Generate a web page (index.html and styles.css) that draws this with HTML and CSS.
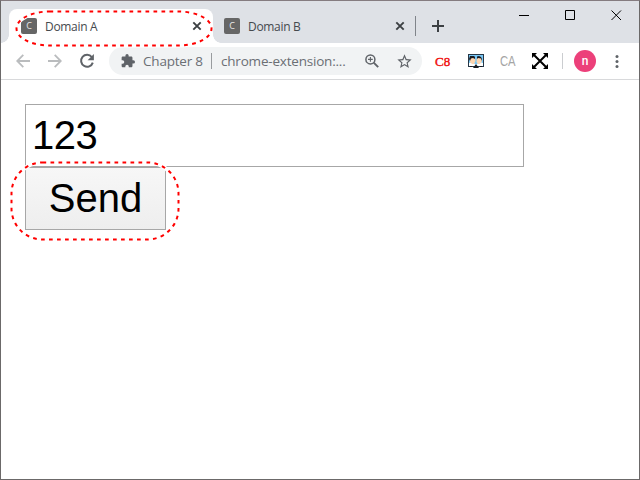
FILE: index.html
```
<!DOCTYPE html>
<html lang="en">
<head>
<meta charset="utf-8">
<title>Domain A</title>
<link rel="stylesheet" href="styles.css">
</head>
<body>
<div class="window">
  <header class="tabstrip">
    <div class="tab active">
      <span class="favicon">C</span><span class="title">Domain A</span>
      <svg class="close" width="10" height="10" viewBox="0 0 10 10"><path d="M1.3 1.3l7.4 7.4M8.7 1.3L1.3 8.7"/></svg>
    </div>
    <div class="tab">
      <span class="favicon">C</span><span class="title">Domain B</span>
      <svg class="close" width="10" height="10" viewBox="0 0 10 10"><path d="M1.3 1.3l7.4 7.4M8.7 1.3L1.3 8.7"/></svg>
    </div>
    <span class="tab-divider"></span>
    <svg class="new-tab" width="12" height="12" viewBox="0 0 12 12"><path d="M6 0v12M0 6h12"/></svg>
    <div class="controls">
      <svg width="11" height="11" viewBox="0 0 11 11"><path d="M0 5.5h10"/></svg>
      <svg width="11" height="11" viewBox="0 0 11 11"><path d="M.5 .5h9v9h-9z"/></svg>
      <svg width="11" height="11" viewBox="0 0 11 11"><path d="M.5 .5l9.5 9.5M10 .5L.5 10"/></svg>
    </div>
  </header>
  <nav class="toolbar">
    <svg class="arrow" width="14" height="14" viewBox="0 0 14 14"><path d="M14 7H1.3M7.3 .9L1.2 7l6.1 6.1"/></svg>
    <svg class="arrow forward" width="14" height="14" viewBox="0 0 14 14"><path d="M0 7h12.7M6.7 .9L12.8 7l-6.1 6.1"/></svg>
    <svg class="reload" width="16" height="16" viewBox="0 0 16 16"><path class="arc" d="M12.8 4A6 6 0 1 0 13.8 9.6"/><path class="head" d="M14.9 1v6.3H8.6z"/></svg>
    <div class="omnibox">
      <svg class="puzzle" width="14" height="14" viewBox="1 1 22 22"><path d="M20.5 11H19V7c0-1.1-.9-2-2-2h-4V3.500a2.500 2.500 0 0 0-5 0V5H4c-1.100 0-2 .9-2 2v3.800h1.500a2.700 2.700 0 0 1 0 5.400H2V20c0 1.100.9 2 2 2h3.800v-1.500a2.700 2.700 0 0 1 5.400 0V22H17c1.100 0 2-.9 2-2v-4h1.500a2.500 2.500 0 0 0 0-5z"/></svg>
      <span class="chapter">Chapter 8</span><span class="url">chrome-extension:...</span>
      <svg class="magnify" width="14" height="14" viewBox="0 0 14 14"><circle cx="5.4" cy="5.400" r="4.500"/><path d="M8.700 8.700l4.500 4.500" stroke-width="1.900"/><path d="M5.400 3v4.800M3 5.400h4.800" stroke-width="1.100"/></svg>
      <svg class="star" width="15" height="15" viewBox="1.500 1.500 21 21"><path d="M22 9.240l-7.190-.62L12 2 9.190 8.630 2 9.240l5.460 4.730L5.820 21 12 17.270 18.180 21l-1.630-7.030L22 9.240zM12 15.400l-3.760 2.270 1-4.280-3.320-2.880 4.380-.38L12 6.100l1.710 4.040 4.380.38-3.320 2.880 1 4.280L12 15.400z"/></svg>
    </div>
    <span class="c8">C8</span>
    <svg class="photo" width="16" height="16" viewBox="0 0 16 16">
      <path fill="#263746" d="M0 1h16v13H0z"/><path fill="#78c6f4" d="M1 2h14v11H1z"/>
      <path fill="#fff" d="M1 10l3-1 3 2h2l3-2 3 1v3H1z"/>
      <path fill="#ffd6b0" d="M2 5h5l.5 3L6 11H4L2 9zM9 5h4l1 3-2 3h-2L8.500 9z"/>
      <path fill="#191b20" d="M2 3h4l1 1v2L5 5 3 5.500 2 8 1 6zM9 3.500l2-.5 2 1 1 2v2l-1-2.500-3-.5L9 6zM5 15l3-4 3 4zM2 13h2v1H2zM12 13h2v1h-2z"/>
    </svg>
    <span class="ca">CA</span>
    <svg class="expand" width="16" height="16" viewBox="0 0 16 16"><path stroke="#000" stroke-width="2" d="M2 2l12 12M14 2L2 14"/><path d="M0 0h5L0 5zM11 0h5v5zM0 11v5h5zM16 11v5h-5z"/></svg>
    <span class="divider"></span>
    <span class="avatar">n</span>
    <svg class="menu" width="4" height="13" viewBox="0 0 4 13"><circle cx="2" cy="1.600" r="1.500"/><circle cx="2" cy="6.500" r="1.500"/><circle cx="2" cy="11.400" r="1.500"/></svg>
  </nav>
  <main class="page">
    <input class="field" type="text" value="123" aria-label="Message">
    <button class="send">Send</button>
  </main>
  <svg class="marks" width="640" height="480" viewBox="0 0 640 480">
    <rect class="halo" x="16.500" y="11.500" width="195" height="34" rx="33" ry="17"/>
    <rect class="dash" x="16.500" y="11.500" width="195" height="34" rx="33" ry="17"/>
    <rect class="halo" x="11.500" y="162.500" width="167" height="77" rx="31" ry="31"/>
    <rect class="dash" x="11.500" y="162.500" width="167" height="77" rx="31" ry="31"/>
  </svg>
</div>
</body>
</html>
```
FILE: styles.css
```
* { box-sizing: border-box; }
body { margin: 0; font-family: "Open Sans", "Noto Sans", sans-serif; }
svg { display: block; flex: none; fill: none; }
.window {
  position: relative;
  width: 640px;
  height: 480px;
  overflow: hidden;
  border: 1px solid #6b6969;
  border-top-color: #857c80;
  background: #fff;
}
.tabstrip {
  display: flex;
  height: 42px;
  padding: 8px 0 0 8px;
  background: #dee1e6;
}
.tab {
  position: relative;
  display: flex;
  align-items: center;
  width: 202px;
  height: 34px;
  padding: 0 10px 0 11px;
  color: #45494e;
}
.tab.active { width: 204px; padding: 0 11px 0 12px; background: #fff; border-radius: 8px 8px 0 0; }
.tab.active::before, .tab.active::after {
  content: "";
  position: absolute;
  bottom: 0;
  width: 8px;
  height: 8px;
}
.tab.active::before { left: -8px; background: radial-gradient(circle at 0 0, transparent 7.5px, #fff 8px); }
.tab.active::after { right: -8px; background: radial-gradient(circle at 100% 0, transparent 7.5px, #fff 8px); }
.favicon {
  width: 16px;
  height: 16px;
  border-radius: 2px;
  background: #666;
  color: #e8e8e8;
  font-size: 9px;
  line-height: 16px;
  text-align: center;
}
.title { margin: 1px 0 0 8px; font-size: 12px; letter-spacing: -.32px; line-height: 18px; }
.close { margin-left: auto; stroke: #3c4043; stroke-width: 1.9; }
.tab-divider { width: 1px; height: 20px; margin-top: 7px; background: #80848a; }
.new-tab { margin: 11px 0 0 16px; stroke: #3c4043; stroke-width: 2; }
.controls { display: flex; gap: 35px; margin-left: 75px; stroke: #000; stroke-width: 1; }
.controls svg { margin-top: 1px; }
.toolbar {
  display: flex;
  align-items: center;
  height: 37px;
  padding-left: 15px;
  border-bottom: 1px solid #d8d9db;
}
.arrow { stroke: #babcbe; stroke-width: 1.8; }
.forward { margin-left: 18px; }
.reload { margin-left: 17px; }
.arc { stroke: #5f6368; stroke-width: 2; }
.head { fill: #5f6368; }
.omnibox {
  display: flex;
  align-items: center;
  width: 313px;
  height: 28px;
  margin-left: 14px;
  padding-left: 12px;
  border-radius: 14px;
  background: #f1f3f4;
  color: #6b6f74;
  font-size: 13.5px;
  letter-spacing: -.2px;
  white-space: nowrap;
}
.puzzle { fill: #5f6368; margin-right: 8px; }
.chapter { flex: none; width: 69px; height: 16px; line-height: 16px; border-right: 1px solid #999c9f; }
.url { flex: none; width: 153px; padding-left: 9px; line-height: 16px; }
.magnify { stroke: #5f6368; stroke-width: 1.5; }
.star { margin-left: 18px; fill: #5f6368; }
.c8 { width: 19px; margin: 2px 0 0 13px; color: #f00b0b; font: 13px "Liberation Serif", serif; -webkit-text-stroke: .4px #f00b0b; }
.photo { margin-left: 14px; }
.ca { width: 17px; margin: -1px 0 0 16px; color: #a5a5a5; font: 15px "Liberation Sans", sans-serif; transform: scaleX(.75); transform-origin: left; }
.expand { margin-left: 15px; fill: #000; }
.divider { width: 1px; height: 16px; margin-left: 14px; background: #cbcdd0; }
.avatar {
  width: 22px;
  height: 22px;
  margin-left: 11px;
  border-radius: 50%;
  background: #ec407a;
  color: #fff;
  font: 500 12px/22px Roboto, sans-serif;
  text-align: center;
}
.menu { margin-left: 19px; fill: #5f6368; }
.page { display: flex; flex-direction: column; align-items: flex-start; padding: 24px; }
.field, .send { border: 1px solid #a7a7a7; color: #000; font: 40px "Liberation Sans", Arial, sans-serif; }
.field { width: 499px; height: 63px; padding: 0 7px 1px 6px; background: #fff; letter-spacing: -.5px; }
.send { width: 141px; height: 63px; padding: 0; background: linear-gradient(#f7f7f7, #eee); }
.marks { position: absolute; left: -1px; top: -1px; pointer-events: none; }
.halo { stroke: #fff; stroke-width: 4; }
.dash { stroke: #f00; stroke-width: 2; stroke-dasharray: 3.7 4.3; }
```
